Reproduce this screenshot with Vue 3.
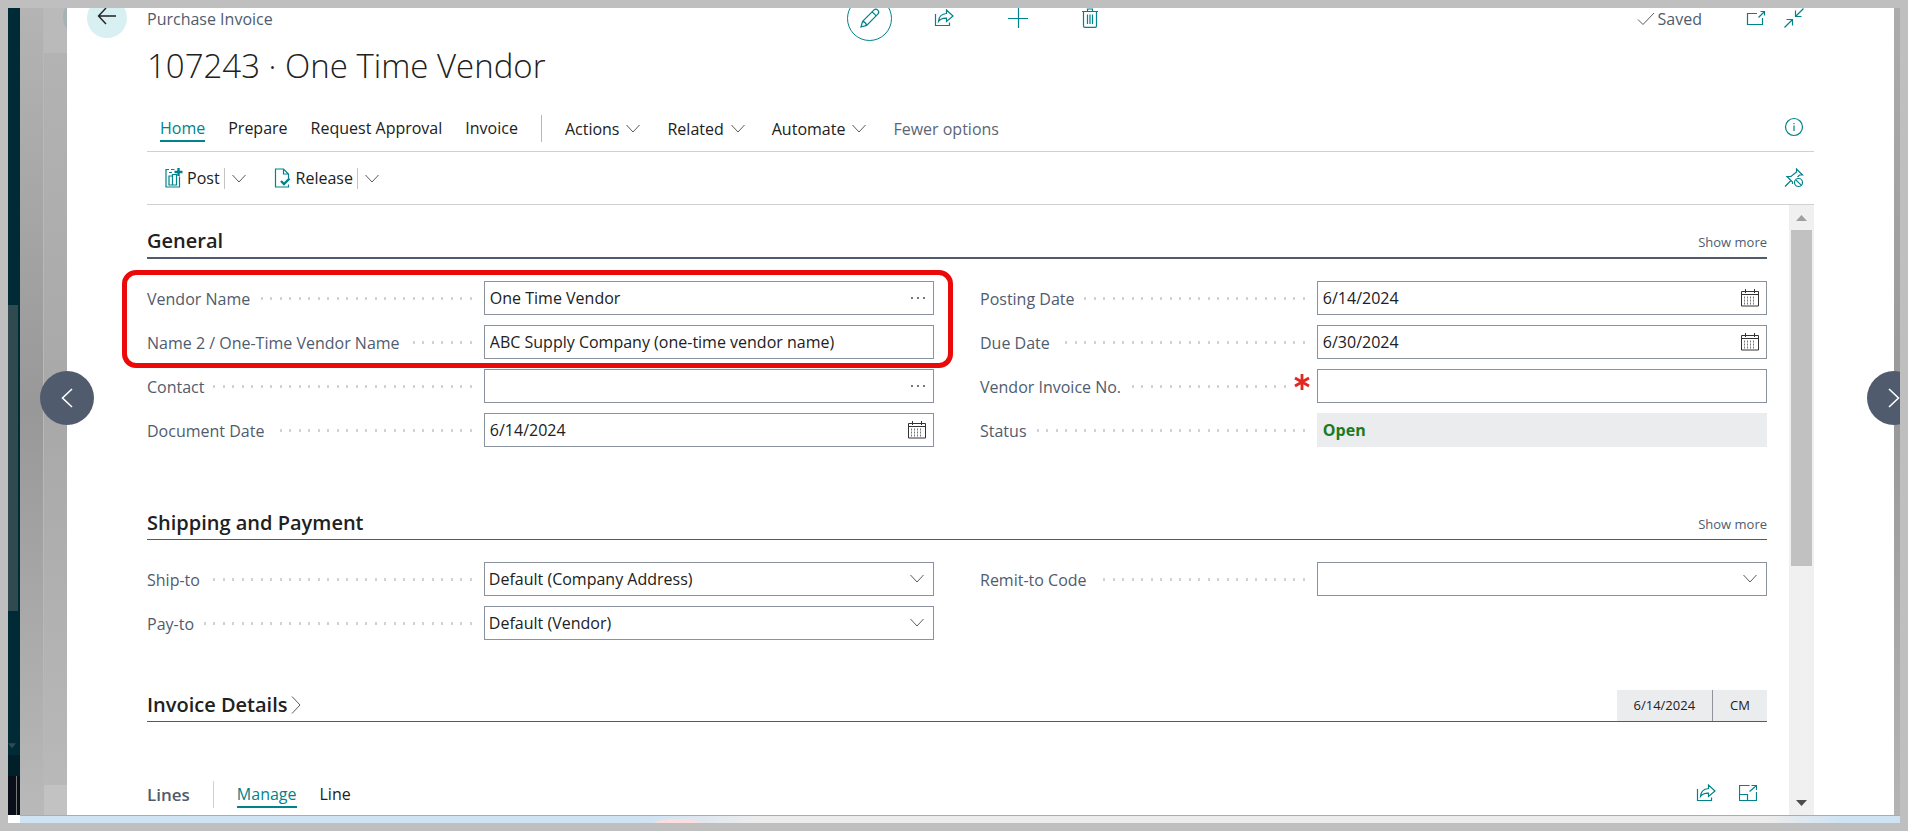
<script setup>
import { ref } from 'vue'

const vendorName = ref('One Time Vendor')
const vendorName2 = ref('ABC Supply Company (one-time vendor name)')
const contact = ref('')
const documentDate = ref('6/14/2024')
const postingDate = ref('6/14/2024')
const dueDate = ref('6/30/2024')
const vendorInvoiceNo = ref('')
const status = ref('Open')
const shipTo = ref('Default (Company Address)')
const payTo = ref('Default (Vendor)')
const remitTo = ref('')

const tabs = ['Home', 'Prepare', 'Request Approval', 'Invoice']
const menus = ['Actions', 'Related', 'Automate']
</script>

<template>
  <div class="frame">
    <div class="stage">
      <div class="nav-edge">
        <div class="nav-top"></div>
        <div class="nav-thumb"></div>
        <div class="nav-rest"><span class="nav-arrow"></span></div>
        <div class="nav-foot"></div>
        <div class="nav-task"></div>
      </div>
      <div class="back-one"></div>
      <div class="back-two"><span class="back-dot"></span></div>

      <main class="dialog">
        <header class="topbar">
          <div class="top-left">
            <button class="back" aria-label="Back">
              <svg width="20" height="18" viewBox="0 0 20 18"><path d="M19 9H1.500M9 1L1.500 9L9 17" /></svg>
            </button>
            <span class="caption">Purchase Invoice</span>
          </div>
          <div class="top-mid">
            <button class="icon round" aria-label="Edit">
              <svg width="22" height="22" viewBox="0 0 22 22"><path d="M2 20L3.600 14.400L14.800 3.200Q16.800 1.200 18.800 3.200Q20.800 5.200 18.800 7.200L7.600 18.400ZM3.600 14.400Q6.800 15 7.600 18.400M13.200 4.800L17.200 8.800M2.300 18.800L3.200 19.700" /></svg>
            </button>
            <button class="icon" aria-label="Share">
              <svg width="20" height="18" viewBox="0 0 20 18"><path d="M1.500 5V16.500H15.500V13.500M4.500 12.500Q5 5 12.500 4.500V1L19 7L12.500 12.500V9.200Q7 9 4.500 12.500Z" /></svg>
            </button>
            <button class="icon" aria-label="New">
              <svg width="20" height="20" viewBox="0 0 20 20"><path d="M0 10.500H20M10.500 0V20" /></svg>
            </button>
            <button class="icon" aria-label="Delete">
              <svg width="16" height="20" viewBox="0 0 16 20"><path d="M0 3.500H16M5.500 3V1H10.500V3M1.500 3.500V18Q1.500 19.300 3 19.300H13Q14.500 19.300 14.500 18V3.500M5.500 6.500V16M8 6.500V16M10.500 6.500V16" /></svg>
            </button>
          </div>
          <div class="top-right">
            <span class="saved caption">
              <svg width="18" height="14" viewBox="0 0 18 14"><path d="M1 7.500L6 12.500L17 1" /></svg>Saved
            </span>
            <button class="icon" aria-label="Open in new window">
              <svg width="20" height="16" viewBox="0 0 20 16"><path d="M11 3.500H1.500V14.500H16.500V8M12.500 7.500L18.500 1.500M14.500 1.500H18.500V5.500" /></svg>
            </button>
            <button class="icon" aria-label="Collapse">
              <svg width="20" height="20" viewBox="0 0 20 20"><path d="M19.500 0.500L11.500 8.500M11.500 2.500V8.500H17.500M0.500 19.500L8.500 11.500M2.500 11.500H8.500V17.500" /></svg>
            </button>
          </div>
        </header>

        <h1>107243 · One Time Vendor</h1>

        <nav class="tabs">
          <a v-for="(t, i) in tabs" :key="t" href="#" :class="{ active: i === 0 }">{{ t }}</a>
          <span class="rule"></span>
          <button v-for="m in menus" :key="m" class="menu">
            {{ m }}<svg width="14" height="9" viewBox="0 0 14 9"><path d="M0.500 1L7 8L13.500 1" /></svg>
          </button>
          <button class="menu fewer">Fewer options</button>
          <button class="icon end" aria-label="Details">
            <svg width="20" height="20" viewBox="0 0 20 20"><circle cx="10" cy="10" r="8.500" /><path d="M10 8.500V14M10 6V7.300" /></svg>
          </button>
        </nav>

        <div class="toolbar">
          <button class="tool">
            <svg class="glyph" width="18" height="20" viewBox="0 0 18 20"><path d="M4 1.500H1V19H14.500V8.500M4 4.500H7M6 1.500H9.500M4 17V8H7.500V17ZM7.500 17V6.500H11.500V17ZM4 17H11.500" /><path d="M13.500 0V8M9.500 4H17.500" class="bold" /></svg>Post
          </button>
          <button class="split" aria-label="Post options">
            <svg width="14" height="9" viewBox="0 0 14 9"><path d="M0.500 1L7 8L13.500 1" /></svg>
          </button>
          <button class="tool second">
            <svg class="glyph" width="18" height="20" viewBox="0 0 18 20"><path d="M14.500 16.500V19H1.500V1H9.500L14.500 6V10M9.500 1V6H14.500" /><path d="M7 13L10 16L15.500 10.500" class="bold" /></svg>Release
          </button>
          <button class="split" aria-label="Release options">
            <svg width="14" height="9" viewBox="0 0 14 9"><path d="M0.500 1L7 8L13.500 1" /></svg>
          </button>
          <button class="icon end" aria-label="Unpin">
            <svg width="20" height="20" viewBox="0 0 20 20"><path d="M1 18.500L7 12.500M8.500 16V14L3 8.500H7L12.500 4V1L18.500 7H15.500L13.500 9" /><circle cx="14.500" cy="14.500" r="4" /><path d="M11.800 11.800L17.200 17.200" /></svg>
          </button>
        </div>

        <div class="scroll">
          <div class="content">
            <section>
              <div class="head thick">
                <h2>General</h2>
                <a href="#" class="more">Show more</a>
              </div>
              <div class="columns tall">
                <div class="col">
                  <div class="col marked">
                    <div class="row">
                      <label for="vendor">Vendor Name</label><span class="dots"></span>
                      <div class="box">
                        <input id="vendor" v-model="vendorName" />
                        <button class="assist" aria-label="Look up vendor"><svg width="16" height="4" viewBox="0 0 16 4"><path d="M1 1H3V3H1ZM7 1H9V3H7ZM13 1H15V3H13Z" class="solid" /></svg></button>
                      </div>
                    </div>
                    <div class="row">
                      <label for="vendor2">Name 2 / One-Time Vendor Name</label><span class="dots"></span>
                      <div class="box"><input id="vendor2" v-model="vendorName2" /></div>
                    </div>
                  </div>
                  <div class="row">
                    <label for="contact">Contact</label><span class="dots"></span>
                    <div class="box">
                      <input id="contact" v-model="contact" />
                      <button class="assist" aria-label="Look up contact"><svg width="16" height="4" viewBox="0 0 16 4"><path d="M1 1H3V3H1ZM7 1H9V3H7ZM13 1H15V3H13Z" class="solid" /></svg></button>
                    </div>
                  </div>
                  <div class="row">
                    <label for="docdate">Document Date</label><span class="dots"></span>
                    <div class="box">
                      <input id="docdate" v-model="documentDate" />
                      <button class="assist" aria-label="Pick document date"><svg width="18" height="18" viewBox="0 0 18 18"><path d="M0.500 2.500H17.500V17H0.500ZM0.500 5.500H17.500M4.500 0V4M13.500 0V4" /><path d="M3 8.500H15M3 11.500H15M3 14.500H15" class="days" /></svg></button>
                    </div>
                  </div>
                </div>
                <div class="col">
                  <div class="row">
                    <label for="posting">Posting Date</label><span class="dots"></span>
                    <div class="box">
                      <input id="posting" v-model="postingDate" />
                      <button class="assist" aria-label="Pick posting date"><svg width="18" height="18" viewBox="0 0 18 18"><path d="M0.500 2.500H17.500V17H0.500ZM0.500 5.500H17.500M4.500 0V4M13.500 0V4" /><path d="M3 8.500H15M3 11.500H15M3 14.500H15" class="days" /></svg></button>
                    </div>
                  </div>
                  <div class="row">
                    <label for="due">Due Date</label><span class="dots"></span>
                    <div class="box">
                      <input id="due" v-model="dueDate" />
                      <button class="assist" aria-label="Pick due date"><svg width="18" height="18" viewBox="0 0 18 18"><path d="M0.500 2.500H17.500V17H0.500ZM0.500 5.500H17.500M4.500 0V4M13.500 0V4" /><path d="M3 8.500H15M3 11.500H15M3 14.500H15" class="days" /></svg></button>
                    </div>
                  </div>
                  <div class="row">
                    <label for="invno">Vendor Invoice No.</label><span class="dots"></span>
                    <svg class="required" width="16" height="18" viewBox="0 0 16 18"><path d="M8 1V17M1 5L15 13M15 5L1 13" /></svg>
                    <div class="box"><input id="invno" v-model="vendorInvoiceNo" required /></div>
                  </div>
                  <div class="row">
                    <label for="status">Status</label><span class="dots"></span>
                    <div class="box"><input id="status" class="status" :value="status" readonly /></div>
                  </div>
                </div>
              </div>
            </section>

            <section>
              <div class="head">
                <h2>Shipping and Payment</h2>
                <a href="#" class="more">Show more</a>
              </div>
              <div class="columns">
                <div class="col">
                  <div class="row">
                    <label for="shipto">Ship-to</label><span class="dots"></span>
                    <div class="box">
                      <select id="shipto" v-model="shipTo"><option>Default (Company Address)</option></select>
                      <svg class="chev" width="14" height="9" viewBox="0 0 14 9"><path d="M0.500 1L7 8L13.500 1" /></svg>
                    </div>
                  </div>
                  <div class="row">
                    <label for="payto">Pay-to</label><span class="dots"></span>
                    <div class="box">
                      <select id="payto" v-model="payTo"><option>Default (Vendor)</option></select>
                      <svg class="chev" width="14" height="9" viewBox="0 0 14 9"><path d="M0.500 1L7 8L13.500 1" /></svg>
                    </div>
                  </div>
                </div>
                <div class="col">
                  <div class="row">
                    <label for="remit">Remit-to Code</label><span class="dots"></span>
                    <div class="box">
                      <select id="remit" v-model="remitTo"><option value=""></option></select>
                      <svg class="chev" width="14" height="9" viewBox="0 0 14 9"><path d="M0.500 1L7 8L13.500 1" /></svg>
                    </div>
                  </div>
                </div>
              </div>
            </section>

            <section>
              <div class="head">
                <h2>Invoice Details<svg width="10" height="18" viewBox="0 0 10 18"><path d="M1 0.500L9 9L1 17.500" /></svg></h2>
                <div class="facts"><span>6/14/2024</span><span>CM</span></div>
              </div>
            </section>

            <div class="lines">
              <h3>Lines</h3>
              <span class="rule"></span>
              <a href="#" class="active">Manage</a>
              <a href="#">Line</a>
              <button class="icon end" aria-label="Share lines">
                <svg width="20" height="18" viewBox="0 0 20 18"><path d="M1.500 5V16.500H15.500V13.500M4.500 12.500Q5 5 12.500 4.500V1L19 7L12.500 12.500V9.200Q7 9 4.500 12.500Z" /></svg>
              </button>
              <button class="icon" aria-label="Expand lines">
                <svg width="18" height="16" viewBox="0 0 18 16"><path d="M10.500 0.500H0.500V15.500H17.500V7M0.500 9.500H8.500V15.500M10.500 6.500L17 1M12.500 0.500H17.500V5" /></svg>
              </button>
            </div>
          </div>

          <div class="scrollbar">
            <span class="arrow up"></span>
            <div class="track"><div class="thumb"></div></div>
            <span class="arrow down"></span>
          </div>
        </div>
      </main>
      <div class="back-right"></div>

      <button class="pager prev" aria-label="Previous">
        <svg width="12" height="20" viewBox="0 0 12 20"><path d="M11 1L1.500 10L11 19" /></svg>
      </button>
      <button class="pager next" aria-label="Next">
        <svg width="12" height="20" viewBox="0 0 12 20"><path d="M1 1L10.500 10L1 19" /></svg>
      </button>
    </div>
    <div class="desktop"></div>
  </div>
</template>

<style>
body {
  margin: 0;
}
</style>

<style scoped>
* {
  box-sizing: border-box;
}
.frame {
  display: flex;
  flex-direction: column;
  height: 100vh;
  border: 8px solid #bfbfbf;
  overflow: hidden;
  font-family: "Open Sans", "Noto Sans", sans-serif;
  font-size: 16px;
  line-height: 22px;
  color: #212121;
}
.stage {
  position: relative;
  display: flex;
  flex: 1;
  min-height: 0;
}
.desktop {
  flex: none;
  height: 8px;
  margin-left: 12px;
  border-top: 1px solid #a9adb1;
  background:
    radial-gradient(ellipse 24px 4px at 35% 100%, #fbdfe0 90%, transparent),
    linear-gradient(90deg, #cfe3f3 0%, #cfe3f3 33%, #ececec 39%, #ececec 93%, #cfe3f3 97%);
}
.nav-edge {
  display: flex;
  flex-direction: column;
  width: 12px;
  background: #002a35;
}
.nav-top { flex: 297; }
.nav-thumb { flex: 307; width: 10px; background: #2f4b50; }
.nav-rest { flex: 144; }
.nav-arrow {
  display: block;
  width: 8px;
  height: 5px;
  margin-top: 132px;
  background: #2f4b50;
  clip-path: polygon(0 0, 100% 0, 50% 100%);
}
.nav-foot { flex: 21; background: #001f28; }
.nav-task {
  flex: 39;
  background: linear-gradient(90deg, transparent 8px, #777 8px, #777 9px, transparent 9px), #090e18;
}
.back-one {
  width: 23px;
  background: linear-gradient(180deg, #b4b4b4, #989898 50%, #b9b9b9);
}
.back-two {
  width: 24px;
  border-left: 1px solid #b8b8b8;
  background:
    linear-gradient(180deg, #bababa 45px, transparent 45px),
    linear-gradient(0deg, #c2c2c2 30px, transparent 30px),
    linear-gradient(180deg, #b4b4b4, #a8a8a8 50%, #bababa);
  overflow: hidden;
}
.back-dot {
  display: block;
  width: 40px;
  height: 40px;
  margin: -11px 0 0 19px;
  border-radius: 20px;
  background: #a3b3b4;
}
.back-right {
  width: 6px;
  background: linear-gradient(180deg, #acacac, #989898 50%, #b4b4b4);
}
.dialog {
  display: flex;
  flex: 1;
  flex-direction: column;
  min-width: 0;
  padding: 0 80px;
  background: #fff;
  overflow: hidden;
}
button {
  padding: 0;
  border: 0;
  background: none;
  font: inherit;
  color: inherit;
}
a {
  color: inherit;
  text-decoration: none;
}
svg {
  display: block;
  flex: none;
}
path, circle {
  fill: none;
  stroke: #5c5c5c;
  stroke-width: 1;
}
.icon path, .icon circle, .glyph path {
  stroke: #00838a;
  stroke-width: 1.2;
}
.glyph .bold {
  stroke-width: 2.4;
}
.topbar {
  display: flex;
  flex: none;
  align-items: center;
  height: 44px;
  margin-top: -12px;
}
.top-left, .top-right {
  display: flex;
  flex: 1;
  align-items: center;
}
.top-left {
  gap: 20px;
  margin-left: -60px;
  color: #505c6d;
}
.caption {
  padding-top: 2px;
}
.back {
  display: grid;
  place-items: center;
  width: 40px;
  height: 40px;
  border-radius: 50%;
  background: #d8f0f2;
}
.back svg {
  margin-bottom: 4px;
}
.back path {
  stroke: #222;
  stroke-width: 1.4;
}
.top-mid {
  display: flex;
  align-items: center;
  gap: 54px;
  margin-left: 54px;
}
.round {
  display: grid;
  place-items: center;
  width: 45px;
  height: 45px;
  margin-right: -12px;
  border: 1px solid #00838a;
  border-radius: 50%;
}
.top-right {
  justify-content: flex-end;
  padding-right: 10px;
  gap: 18px;
  color: #505c6d;
}
.saved {
  display: flex;
  align-items: center;
  gap: 3px;
  margin-right: 26px;
}
h1 {
  flex: none;
  margin: 0;
  padding-top: 3px;
  font-size: 33px;
  font-weight: 300;
  line-height: 45px;
}
.tabs {
  display: flex;
  flex: none;
  align-items: center;
  gap: 23px;
  height: 64px;
  padding: 18px 10px 0 13px;
  border-bottom: 1px solid #cfd1d4;
}
.tabs a, .lines a {
  height: 26px;
  padding-top: 1px;
}
.tabs .end {
  margin-bottom: 4px;
}
a.active {
  border-bottom: 2px solid #00838a;
  color: #00838a;
}
.rule {
  width: 1px;
  height: 27px;
  background: #b4b9c0;
}
.menu {
  display: flex;
  align-items: center;
  gap: 7px;
}
.menu + .menu {
  margin-left: 4px;
}
.fewer {
  color: #5c6675;
}
.end {
  margin-left: auto;
}
.toolbar {
  display: flex;
  flex: none;
  align-items: center;
  height: 53px;
  padding: 0 10px 0 18px;
  border-bottom: 1px solid #cfd1d4;
}
.tool {
  display: flex;
  align-items: center;
  gap: 4px;
}
.second {
  margin-left: 28px;
}
.split {
  height: 21px;
  margin-left: 4px;
  padding-left: 7px;
  border-left: 1px solid #c4c4c4;
}
.scroll {
  display: flex;
  flex: 1;
  min-height: 0;
}
.content {
  flex: 1;
  min-width: 0;
  margin: 0 22px 0 -26px;
  padding-left: 26px;
  overflow: hidden;
}
.head {
  display: flex;
  align-items: flex-end;
  justify-content: space-between;
  height: 54px;
  border-bottom: 1px solid #505c6d;
}
.thick {
  border-bottom-width: 2px;
}
h2 {
  display: flex;
  align-items: center;
  gap: 3px;
  margin: 0;
  padding-bottom: 2px;
  font-size: 20px;
  font-weight: 600;
  line-height: 28px;
}
.more {
  padding-bottom: 5px;
  font-size: 13px;
  line-height: 20px;
  color: #505c6d;
}
.columns {
  display: grid;
  grid-template-columns: 1fr 1fr;
  gap: 46px;
  padding: 22px 0 28px;
}
.tall {
  padding-bottom: 39px;
}
.col {
  display: flex;
  flex-direction: column;
  gap: 10px;
}
.marked {
  position: relative;
}
.marked::after {
  content: "";
  position: absolute;
  inset: -11px -19px -9px -25px;
  border: 5px solid #ea0a0a;
  border-radius: 14px;
  pointer-events: none;
}
.row {
  display: flex;
  align-items: center;
  height: 34px;
}
label {
  padding-top: 1px;
  color: #505c6d;
}
.dots {
  flex: 1;
  height: 3px;
  margin: 0 12px 0 9px;
  background: repeating-linear-gradient(270deg, #d0d2d5 0, #d0d2d5 2px, transparent 2px, transparent 10px, #d0d2d5 10px, #d0d2d5 12px, transparent 12px, transparent 19px);
}
.required {
  margin: -8px 7px 0 -4px;
}
.required path {
  stroke: #e5251f;
  stroke-width: 2.8;
}
.box {
  position: relative;
  width: 57.2%;
  height: 34px;
}
input, select {
  width: 100%;
  height: 100%;
  margin: 0;
  padding: 0 40px 0 5px;
  border: 1px solid #8a929e;
  border-radius: 0;
  outline: 0;
  appearance: none;
  background: #fff;
  font: inherit;
  color: #212121;
}
select {
  padding-left: 4px;
}
.status {
  border: 0;
  padding-left: 6px;
  background: #ebecee;
  font-weight: 700;
  color: #1d7a1d;
}
.assist {
  position: absolute;
  top: 0;
  right: 8px;
  display: grid;
  place-items: center;
  height: 34px;
}
.assist path {
  stroke: #333;
}
.assist .solid {
  fill: #777;
  stroke: none;
}
.assist .days {
  stroke-width: 2;
  stroke: #777;
  stroke-dasharray: 1 2;
}
.chev {
  position: absolute;
  top: 12px;
  right: 10px;
  pointer-events: none;
}
.facts {
  display: flex;
  font-size: 13px;
  line-height: 31px;
  background: #ebecee;
}
.facts span {
  padding: 0 17px;
}
.facts span + span {
  border-left: 1px solid #8f949b;
}
.lines {
  display: flex;
  align-items: center;
  gap: 23px;
  padding: 59px 10px 0 0;
}
h3 {
  margin: 0;
  font-size: 17px;
  font-weight: 600;
  line-height: 27px;
  color: #505c6d;
}
.lines .rule {
  background: #cfd1d4;
}
.lines .icon {
  margin-bottom: 3px;
}
.scrollbar {
  display: flex;
  flex-direction: column;
  width: 25px;
  background: #f0f0f0;
}
.arrow {
  width: 11px;
  height: 6px;
  margin: 10px 7px 9px;
}
.up {
  background: #a0a0a0;
  clip-path: polygon(50% 0, 100% 100%, 0 100%);
}
.down {
  background: #4c4c4c;
  clip-path: polygon(0 0, 100% 0, 50% 100%);
}
.track {
  flex: 1;
  padding: 0 2px;
}
.thumb {
  height: 60%;
  background: #c1c1c1;
}
.pager {
  position: absolute;
  top: 363px;
  display: grid;
  place-items: center;
  width: 54px;
  height: 54px;
  border-radius: 50%;
  background: #505c6d;
}
.pager path {
  stroke: #fff;
  stroke-width: 1.6;
}
.prev {
  left: 32px;
}
.next {
  right: -21px;
}
</style>
